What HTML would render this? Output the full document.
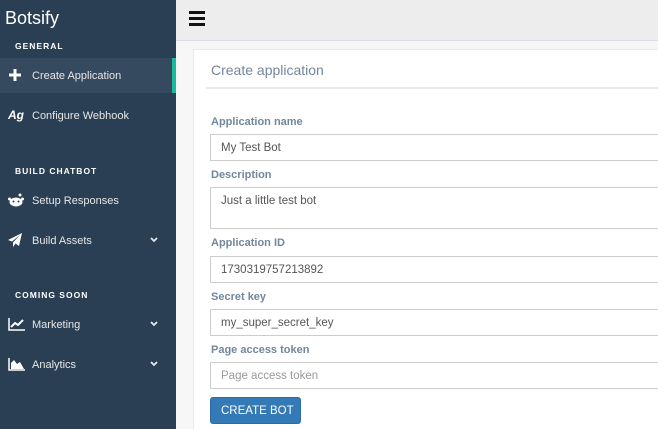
<!DOCTYPE html>
<html><head><style>
*{box-sizing:border-box;margin:0;padding:0}
html,body{width:658px;height:429px;overflow:hidden}
body{font-family:"Liberation Sans",Arial,sans-serif;background:#f7f7f7;position:relative}
.sb{position:absolute;left:0;top:0;width:176px;height:429px;background:#2a3f54;color:#e7e7e7}
.logo{position:absolute;left:5px;top:8px;font-size:18px;color:#fff}
.sec{position:absolute;left:15px;font-size:8.5px;font-weight:bold;letter-spacing:1px;color:#fff}
.it{position:absolute;left:0;width:176px;height:35px;font-size:11px;color:#e7e7e7}
.it span.t{position:absolute;left:32px;top:12px}
.it svg{position:absolute;left:8px;top:10px}
.it svg.chev{left:150px;top:14px}
.act{background:#354a5f}
.act:after{content:"";position:absolute;right:0;top:0;width:4px;height:35px;background:#1abb9c}
.top{position:absolute;left:176px;top:0;right:0;height:41px;background:#ededed;border-bottom:1px solid #d9dee4}
.ham{position:absolute;left:13px;top:11px;width:16px}
.ham i{display:block;height:3px;background:#111;margin-bottom:3px}
.panel{position:absolute;left:193px;top:49px;width:480px;height:390px;background:#fff;border:1px solid #e6e9ed}
.h{position:absolute;left:17px;top:12px;font-size:14px;color:#73879c}
.hr{position:absolute;left:12px;top:37px;right:0;height:2px;background:#e6e9ed}
.lb{position:absolute;left:17px;font-size:11px;font-weight:bold;color:#73879c}
.in{position:absolute;left:16px;width:470px;height:27px;border:1px solid #ccc;font-size:11.5px;color:#555;padding:7px 10px}
.btn{position:absolute;left:16px;top:347px;width:91px;height:27px;background:#337ab7;border:1px solid #2e6da4;border-radius:3px;color:#fff;font-size:11.5px;padding:7px 0 0 10px}
</style></head><body>
<div class="sb">
<div class="logo">Botsify</div>
<div class="sec" style="top:41px">GENERAL</div>
<div class="it act" style="top:58px"><svg width="14" height="14" viewBox="0 0 14 14"><path d="M5.5 1h3v4.5H13v3H8.5V13h-3V8.5H1v-3h4.5z" fill="#fff"/></svg><span class="t">Create Application</span></div>
<div class="it" style="top:98px"><svg width="18" height="14" viewBox="0 0 18 14"><text x="0" y="11" font-size="12" font-weight="bold" font-style="italic" fill="#fff" font-family="Liberation Sans">Ag</text></svg><span class="t">Configure Webhook</span></div>
<div class="sec" style="top:166px">BUILD CHATBOT</div>
<div class="it" style="top:183px"><svg width="16" height="14" viewBox="0 0 16 14"><ellipse cx="8" cy="9" rx="6.5" ry="4.5" fill="#fff"/><circle cx="12" cy="2" r="1.5" fill="#fff"/><circle cx="1.5" cy="6" r="1.5" fill="#fff"/><circle cx="14.5" cy="6" r="1.5" fill="#fff"/><circle cx="5.5" cy="8.5" r="1" fill="#2a3f54"/><circle cx="10.5" cy="8.5" r="1" fill="#2a3f54"/></svg><span class="t">Setup Responses</span></div>
<div class="it" style="top:223px"><svg width="14" height="14" viewBox="0 0 14 14"><path d="M14 0L0 7l4 1.5L12 2 5 9.5V14l2.5-3.5L11 13z" fill="#fff"/></svg><span class="t">Build Assets</span><svg class="chev" width="8" height="6" viewBox="0 0 8 6"><path d="M1 1l3 3 3-3" stroke="#e7e7e7" stroke-width="1.8" fill="none"/></svg></div>
<div class="sec" style="top:290px">COMING SOON</div>
<div class="it" style="top:307px"><svg width="18" height="14" viewBox="0 0 18 14"><path d="M1 1v12h16" stroke="#fff" stroke-width="1.5" fill="none"/><path d="M3 10l4-4 3 2 5-5" stroke="#fff" stroke-width="2" fill="none"/></svg><span class="t">Marketing</span><svg class="chev" width="8" height="6" viewBox="0 0 8 6"><path d="M1 1l3 3 3-3" stroke="#e7e7e7" stroke-width="1.8" fill="none"/></svg></div>
<div class="it" style="top:347px"><svg width="18" height="14" viewBox="0 0 18 14"><path d="M1 1v12h16" stroke="#fff" stroke-width="1.5" fill="none"/><path d="M3 12V6l3-3 3 4 3-2 4 7z" fill="#fff"/></svg><span class="t">Analytics</span><svg class="chev" width="8" height="6" viewBox="0 0 8 6"><path d="M1 1l3 3 3-3" stroke="#e7e7e7" stroke-width="1.8" fill="none"/></svg></div>
</div>
<div class="top"><div class="ham"><i></i><i></i><i></i></div></div>
<div class="panel">
<div class="h">Create application</div><div class="hr"></div>
<div class="lb" style="top:66px">Application name</div>
<div class="in" style="top:84px">My Test Bot</div>
<div class="lb" style="top:119px">Description</div>
<div class="in" style="top:137px;height:42px">Just a little test bot</div>
<div class="lb" style="top:187px">Application ID</div>
<div class="in" style="top:206px">1730319757213892</div>
<div class="lb" style="top:241px">Secret key</div>
<div class="in" style="top:259px">my_super_secret_key</div>
<div class="lb" style="top:294px">Page access token</div>
<div class="in" style="top:312px;color:#999">Page access token</div>
<div class="btn">CREATE BOT</div>
</div>
</body></html>
